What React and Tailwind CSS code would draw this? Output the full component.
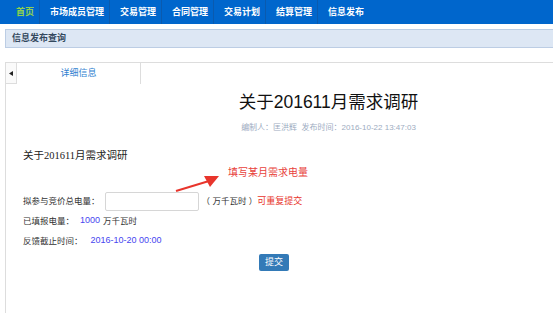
import React from "react";

const navItems = ["首页", "市场成员管理", "交易管理", "合同管理", "交易计划", "结算管理", "信息发布"];

export default function App() {
  const cjk = { fontFamily: '"Liberation Sans", "Noto Sans CJK SC", sans-serif' };
  return (
    <div className="relative w-[553px] h-[313px] overflow-hidden bg-white" style={cjk}>
      {/* top nav */}
      <div className="flex h-[24px] bg-[#0066cc]">
        {navItems.map((t, i) => (
          <div
            key={t}
            className={
              "flex items-center h-full text-[9px] font-bold leading-none " +
              (i === 0 ? "pl-[16px] pr-[5px] text-[#8fd24f] " : "pl-[10px] pr-[5px] text-white ") +
              (i < navItems.length - 1 ? "border-r border-[#0a5aae]" : "")
            }
          >
            {t}
          </div>
        ))}
      </div>

      {/* breadcrumb bar */}
      <div className="pt-[5px] pl-[5px]">
        <div className="flex items-center h-[19px] bg-[#dde7f4] border-y border-l border-[#bccde4] pl-[6px] text-[9px] font-bold text-[#34495e]">
          信息发布查询
        </div>
      </div>

      {/* panel */}
      <div className="mt-[14px] ml-[5px] w-[646px] h-[260px] border-l border-t border-[#dddddd]">
        {/* tab header */}
        <div className="flex h-[21px]">
          <div className="flex items-center justify-center w-[11px] h-full border-r border-b border-[#dddddd] bg-[#fafafa]">
            <svg width="4" height="5" viewBox="0 0 4 5">
              <polygon points="4,0 4,5 0,2.5" fill="#222" />
            </svg>
          </div>
          <div className="flex items-center justify-center w-[124px] h-full border-r border-[#dddddd] text-[9px] text-[#2f7fd0]">
            详细信息
          </div>
        </div>

        {/* title */}
        <div className="mt-[6px] h-[24px] leading-[24px] text-center text-[17.5px] text-[#111]">
          关于201611月需求调研
        </div>
        <div className="mt-[8px] h-[12px] leading-[12px] text-center text-[8px] text-[#9dacbf]">
          编制人：匡洪辉&nbsp;&nbsp;发布时间：2016-10-22 13:47:03
        </div>

        {/* body */}
        <div className="pl-[17px]">
          <div
            className="mt-[14px] h-[16px] leading-[16px] text-[10.5px] text-[#222]"
            style={{ fontFamily: '"Liberation Serif", "Noto Sans CJK SC", serif' }}
          >
            关于201611月需求调研
          </div>

          <div className="mt-[28px] flex items-center h-[19px] text-[8.5px] text-[#333]">
            <span>拟参与竞价总电量：</span>
            <div className="ml-[5px] w-[94px] h-[19px] border border-[#d6d6d6] rounded-[2px] bg-white" />
            <span className="ml-[3px]">（&nbsp;万千瓦时&nbsp;）</span>
            <span className="text-[9px] text-[#e8352c]">可重复提交</span>
          </div>

          <div className="mt-[3px] flex items-center h-[14px] text-[8.5px] text-[#333]">
            <span>已填报电量：</span>
            <span className="ml-[6px] text-[9px] text-[#4646f0]">1000</span>
            <span className="ml-[3px]">万千瓦时</span>
          </div>

          <div className="mt-[6px] flex items-center h-[14px] text-[8.5px] text-[#333]">
            <span>反馈截止时间：</span>
            <span className="ml-[8px] text-[9px] text-[#4646f0]">2016-10-20 00:00</span>
          </div>

          <div className="mt-[6px] ml-[236px]">
            <div className="flex items-center justify-center w-[30px] h-[17px] bg-[#337ab7] rounded-[2px] text-[9px] text-white">
              提交
            </div>
          </div>
        </div>
      </div>

      {/* annotation overlay */}
      <div className="absolute left-[228px] top-[166px] text-[10px] leading-[14px] text-[#e8413b]">
        填写某月需求电量
      </div>
      <svg className="absolute left-0 top-0" width="553" height="313" viewBox="0 0 553 313">
        <line x1="176" y1="191" x2="209" y2="181" stroke="#e8352c" strokeWidth="2" />
        <polygon points="219,176 204,176 210,187" fill="#e8352c" />
      </svg>
    </div>
  );
}
